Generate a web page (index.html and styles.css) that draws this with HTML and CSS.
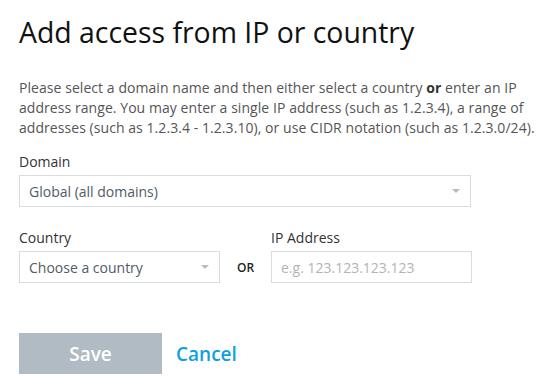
FILE: index.html
```html
<!DOCTYPE html>
<html>
<head>
<meta charset="utf-8">
<link rel="stylesheet" href="styles.css">
</head>
<body>
<div class="page">
  <h1 class="title">Add access from IP or country</h1>
  <p class="intro">Please select a domain name and then either select a country <b>or</b> enter an IP address range. You may enter a single IP address (such as 1.2.3.4), a range of addresses (such as 1.2.3.4 - 1.2.3.10), or use CIDR notation (such as 1.2.3.0/24).</p>
  <div class="field">
    <div class="label">Domain</div>
    <div class="select wide"><span>Global (all domains)</span><i class="caret"></i></div>
  </div>
  <div class="row">
    <div class="field">
      <div class="label">Country</div>
      <div class="select narrow"><span>Choose a country</span><i class="caret"></i></div>
    </div>
    <div class="or">OR</div>
    <div class="field">
      <div class="label">IP Address</div>
      <div class="input"><span>e.g. 123.123.123.123</span></div>
    </div>
  </div>
  <div class="actions">
    <div class="btn">Save</div>
    <div class="cancel">Cancel</div>
  </div>
</div>
</body>
</html>
```

FILE: styles.css
```css
html, body {
  margin: 0;
  padding: 0;
  background: #fff;
}
body {
  font-family: "Open Sans", "Liberation Sans", sans-serif;
}
.page {
  padding: 13px 0 0 19px;
  width: 543px;
  box-sizing: border-box;
}
.title {
  margin: 0;
  font-size: 28.4px;
  font-weight: 400;
  line-height: 38px;
  color: #111;
}
.intro {
  margin: 27px 0 0;
  max-width: 516px;
  font-size: 14px;
  line-height: 20px;
  letter-spacing: 0.06px;
  color: #555;
}
.intro b {
  color: #333;
  font-weight: 700;
}
.field {
  display: flex;
  flex-direction: column;
}
.page > .field {
  margin-top: 14px;
}
.label {
  font-size: 14px;
  line-height: 20px;
  color: #333;
  margin-bottom: 3px;
}
.select, .input {
  box-sizing: border-box;
  height: 32px;
  border: 1px solid #d9dcde;
  display: flex;
  align-items: center;
  justify-content: space-between;
  padding: 0 10px 0 9px;
  font-size: 14px;
  color: #4f5b66;
}
.wide { width: 452px; }
.narrow { width: 201px; }
.input {
  width: 201px;
  color: #b3b3b3;
}
.caret {
  width: 0;
  height: 0;
  border-left: 4px solid transparent;
  border-right: 4px solid transparent;
  border-top: 4px solid #b8bcc0;
}
.row {
  display: flex;
  align-items: flex-end;
  margin-top: 21px;
}
.or {
  width: 51px;
  height: 32px;
  display: flex;
  align-items: center;
  justify-content: center;
  font-size: 12px;
  font-weight: 600;
  color: #222;
}
.actions {
  display: flex;
  align-items: center;
  margin-top: 50px;
  gap: 14px;
}
.btn {
  width: 143px;
  height: 41px;
  background: #b1bbc3;
  color: #fff;
  font-size: 19px;
  font-weight: 600;
  display: flex;
  align-items: center;
  justify-content: center;
}
.cancel {
  color: #0e9fdc;
  font-size: 19px;
  font-weight: 600;
}
```
